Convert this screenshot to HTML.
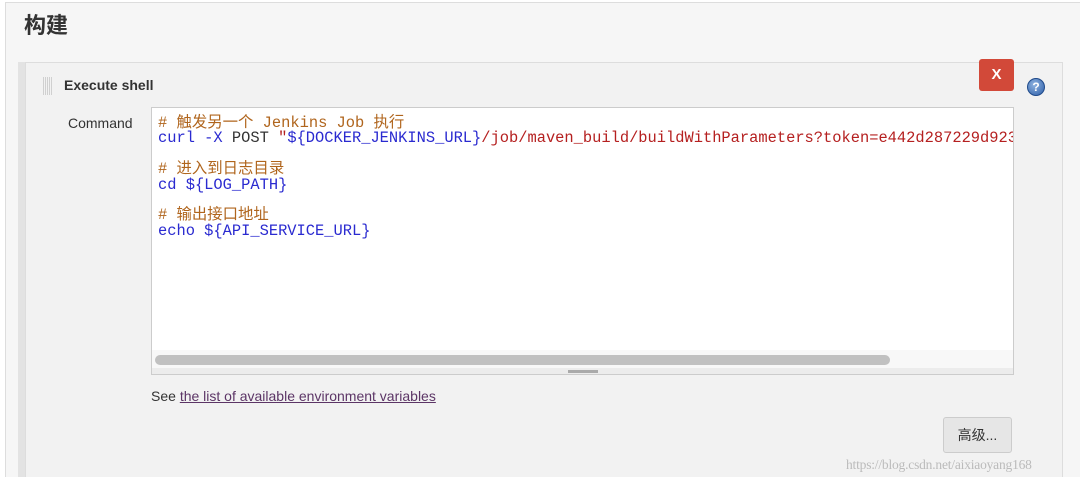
<!DOCTYPE html>
<html><head><meta charset="utf-8"><style>
html,body{margin:0;width:1080px;height:477px;overflow:hidden}
body{background:#fff;position:relative;font-family:"Liberation Sans","Noto Sans CJK SC",sans-serif}
.page{position:absolute;left:5px;top:2px;width:1075px;height:475px;background:#f6f6f6;border-left:1px solid #ddd;border-top:1px solid #ddd;box-sizing:border-box}
h1{position:absolute;left:24px;top:8px;margin:0;font-size:22px;font-weight:bold;color:#333}
.strip{position:absolute;left:18px;top:62px;width:7px;height:415px;background:#e3e3e3}
.panel{position:absolute;left:25px;top:62px;width:1038px;height:415px;background:#f2f2f2;border:1px solid #ddd;border-bottom:none;box-sizing:border-box}
.grip{position:absolute;left:43px;top:77px;width:10px;height:18px;background:repeating-linear-gradient(90deg,#d0d0d0 0 1px,transparent 1px 2px),repeating-linear-gradient(0deg,#f2f2f2 0 1px,transparent 1px 2px)}
.title{position:absolute;left:64px;top:77px;font-size:14px;font-weight:bold;color:#333}
.cmd{position:absolute;left:68px;top:115px;font-size:14px;color:#333}
.ta{position:absolute;left:151px;top:107px;width:863px;height:268px;background:#fff;border:1px solid #ccc;box-sizing:border-box;overflow:hidden}
pre{position:absolute;left:6px;top:8px;margin:0;font-family:"Liberation Mono","Noto Sans CJK SC",monospace;font-size:15.4px;line-height:15.4px;color:#333;white-space:pre}
.c{color:#b0651d}.v{color:#2a2ad0}.s{color:#b52020}
.track{position:absolute;left:0;top:242px;width:861px;height:18px;background:#f8f8f8}
.thumb{position:absolute;left:3px;top:247px;width:735px;height:10px;border-radius:5px;background:#c1c1c1}
.rs{position:absolute;left:0;top:260px;width:861px;height:7px;background:#ececec}
.rs i{position:absolute;left:416px;top:2px;width:30px;height:3px;background:#aaa}
.x{position:absolute;left:979px;top:59px;width:35px;height:32px;background:#d24939;border-radius:3px;color:#fff;font-weight:bold;font-size:15px;text-align:center;line-height:32px}
.help{position:absolute;left:1027px;top:78px;width:16px;height:16px;border-radius:50%;background:radial-gradient(circle at 40% 35%,#8fb3e0,#2d5ea8);border:1px solid #1f4a8a;color:#fff;font-size:12px;font-weight:bold;text-align:center;line-height:16px}
.see{position:absolute;left:151px;top:388px;font-size:14px;color:#333}
.see a{color:#5c3566;text-decoration:underline}
.btn{position:absolute;left:943px;top:417px;width:69px;height:36px;background:#e6e6e6;border:1px solid #ccc;border-radius:3px;box-sizing:border-box;font-size:14px;color:#333;text-align:center;line-height:34px}
.wm{position:absolute;left:846px;top:457px;font-family:"Liberation Serif",serif;font-size:13.5px;color:#bbb;letter-spacing:-0.2px}
</style></head><body>
<div class="page"></div>
<h1>构建</h1>
<div class="strip"></div>
<div class="panel"></div>
<div class="grip"></div>
<div class="title">Execute shell</div>
<div class="x">X</div>
<div class="help">?</div>
<div class="cmd">Command</div>
<div class="ta">
<pre><span class="c"># 触发另一个 Jenkins Job 执行</span>
<span class="v">curl -X</span> POST <span class="s">"</span><span class="v">${DOCKER_JENKINS_URL}</span><span class="s">/job/maven_build/buildWithParameters?token=e442d287229d923</span>

<span class="c"># 进入到日志目录</span>
<span class="v">cd ${LOG_PATH}</span>

<span class="c"># 输出接口地址</span>
<span class="v">echo ${API_SERVICE_URL}</span></pre>
<div class="track"></div><div class="thumb"></div>
<div class="rs"><i></i></div>
</div>
<div class="see">See <a>the list of available environment variables</a></div>
<div class="btn">高级...</div>
<div class="wm">https://blog.csdn.net/aixiaoyang168</div>
</body></html>
